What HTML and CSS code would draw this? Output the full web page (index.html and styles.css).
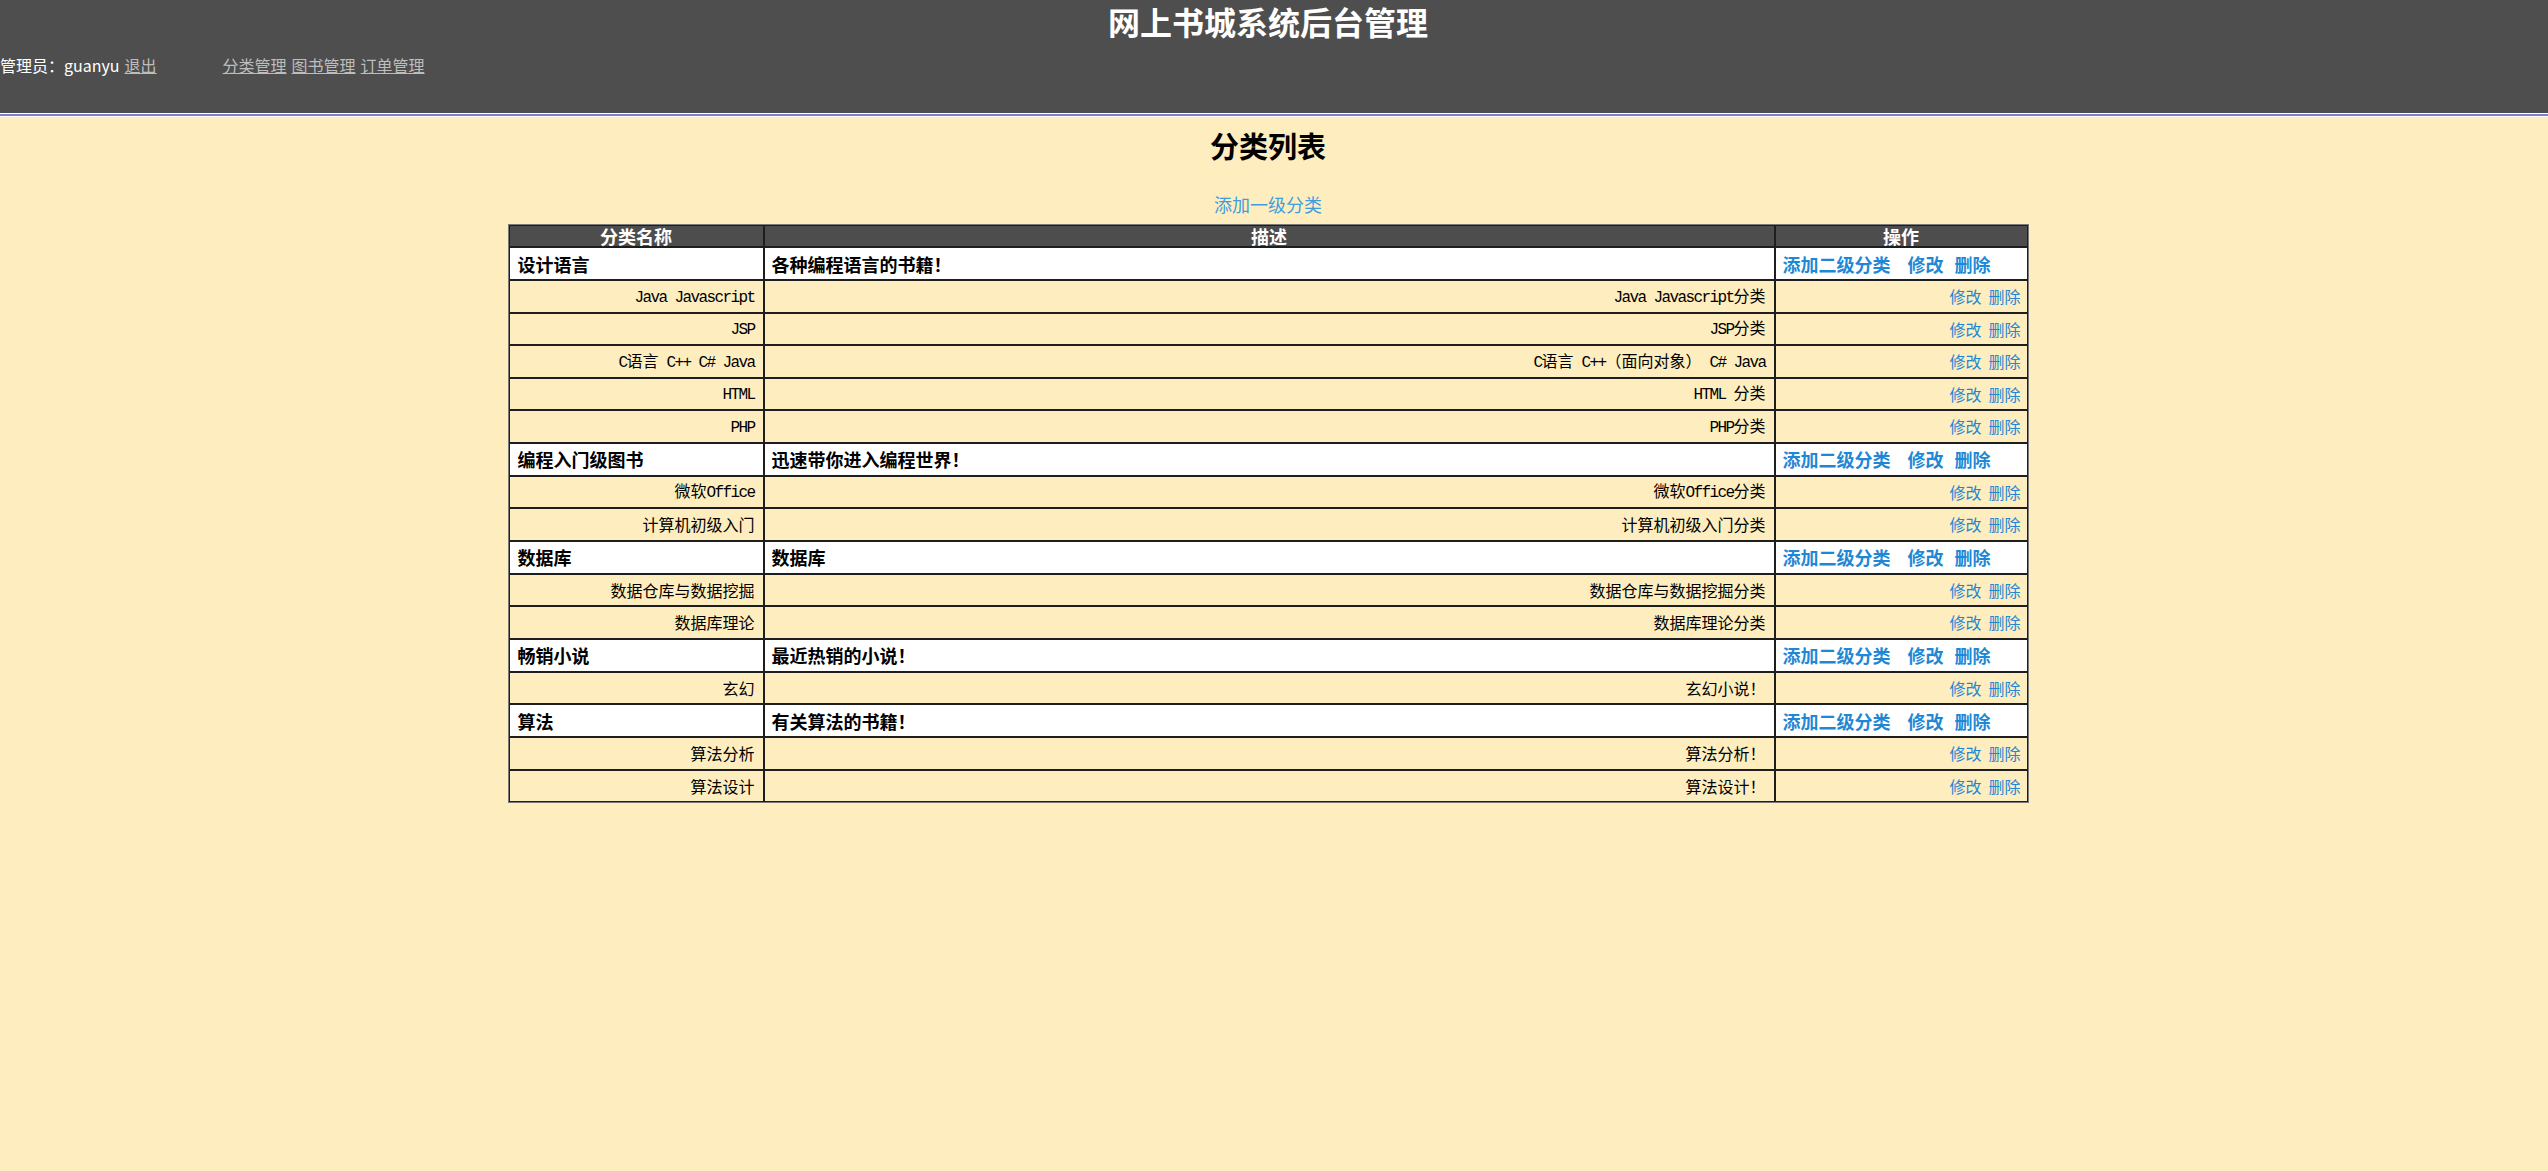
FILE: index.html
```html
<!DOCTYPE html>
<html lang="zh-CN">
<head>
<meta charset="utf-8">
<title>网上书城系统后台管理</title>
<link rel="stylesheet" href="styles.css">
</head>
<body>
<header class="top">
  <h1 class="title">网上书城系统后台管理</h1>
  <div class="bar">
    <span class="admin">管理员：guanyu <a class="toplink" href="#">退出</a></span>
    <nav class="nav">
      <a class="toplink" href="#">分类管理</a>
      <a class="toplink" href="#">图书管理</a>
      <a class="toplink" href="#">订单管理</a>
    </nav>
  </div>
</header>
<div class="rule"></div>
<main class="main">
  <h2 class="heading">分类列表</h2>
  <div class="add-row"><a class="add-top" href="#">添加一级分类</a></div>
  <table class="cats">
    <thead>
      <tr class="head">
        <th class="c1">分类名称</th>
        <th class="c2">描述</th>
        <th class="c3">操作</th>
      </tr>
    </thead>
    <tbody>
      <tr class="p">
        <td class="name">设计语言</td>
        <td class="desc">各种编程语言的书籍！</td>
        <td class="ops"><a class="op op-add" href="#">添加二级分类</a><a class="op op-edit" href="#">修改</a><a class="op" href="#">删除</a></td>
      </tr>
      <tr class="s">
        <td class="name"><span class="en">Java Javascript</span></td>
        <td class="desc"><span class="en">Java Javascript</span>分类</td>
        <td class="ops"><a class="op" href="#">修改</a><a class="op op-del" href="#">删除</a></td>
      </tr>
      <tr class="s">
        <td class="name"><span class="en">JSP</span></td>
        <td class="desc"><span class="en">JSP</span>分类</td>
        <td class="ops"><a class="op" href="#">修改</a><a class="op op-del" href="#">删除</a></td>
      </tr>
      <tr class="s">
        <td class="name"><span class="en">C</span>语言<span class="en"> C++ C# Java</span></td>
        <td class="desc"><span class="en">C</span>语言<span class="en"> C++</span>（面向对象）<span class="en"> C# Java</span></td>
        <td class="ops"><a class="op" href="#">修改</a><a class="op op-del" href="#">删除</a></td>
      </tr>
      <tr class="s">
        <td class="name"><span class="en">HTML</span></td>
        <td class="desc"><span class="en">HTML </span>分类</td>
        <td class="ops"><a class="op" href="#">修改</a><a class="op op-del" href="#">删除</a></td>
      </tr>
      <tr class="s">
        <td class="name"><span class="en">PHP</span></td>
        <td class="desc"><span class="en">PHP</span>分类</td>
        <td class="ops"><a class="op" href="#">修改</a><a class="op op-del" href="#">删除</a></td>
      </tr>
      <tr class="p">
        <td class="name">编程入门级图书</td>
        <td class="desc">迅速带你进入编程世界！</td>
        <td class="ops"><a class="op op-add" href="#">添加二级分类</a><a class="op op-edit" href="#">修改</a><a class="op" href="#">删除</a></td>
      </tr>
      <tr class="s">
        <td class="name">微软<span class="en">Office</span></td>
        <td class="desc">微软<span class="en">Office</span>分类</td>
        <td class="ops"><a class="op" href="#">修改</a><a class="op op-del" href="#">删除</a></td>
      </tr>
      <tr class="s">
        <td class="name">计算机初级入门</td>
        <td class="desc">计算机初级入门分类</td>
        <td class="ops"><a class="op" href="#">修改</a><a class="op op-del" href="#">删除</a></td>
      </tr>
      <tr class="p">
        <td class="name">数据库</td>
        <td class="desc">数据库</td>
        <td class="ops"><a class="op op-add" href="#">添加二级分类</a><a class="op op-edit" href="#">修改</a><a class="op" href="#">删除</a></td>
      </tr>
      <tr class="s">
        <td class="name">数据仓库与数据挖掘</td>
        <td class="desc">数据仓库与数据挖掘分类</td>
        <td class="ops"><a class="op" href="#">修改</a><a class="op op-del" href="#">删除</a></td>
      </tr>
      <tr class="s">
        <td class="name">数据库理论</td>
        <td class="desc">数据库理论分类</td>
        <td class="ops"><a class="op" href="#">修改</a><a class="op op-del" href="#">删除</a></td>
      </tr>
      <tr class="p">
        <td class="name">畅销小说</td>
        <td class="desc">最近热销的小说！</td>
        <td class="ops"><a class="op op-add" href="#">添加二级分类</a><a class="op op-edit" href="#">修改</a><a class="op" href="#">删除</a></td>
      </tr>
      <tr class="s">
        <td class="name">玄幻</td>
        <td class="desc">玄幻小说！</td>
        <td class="ops"><a class="op" href="#">修改</a><a class="op op-del" href="#">删除</a></td>
      </tr>
      <tr class="p">
        <td class="name">算法</td>
        <td class="desc">有关算法的书籍！</td>
        <td class="ops"><a class="op op-add" href="#">添加二级分类</a><a class="op op-edit" href="#">修改</a><a class="op" href="#">删除</a></td>
      </tr>
      <tr class="s">
        <td class="name">算法分析</td>
        <td class="desc">算法分析！</td>
        <td class="ops"><a class="op" href="#">修改</a><a class="op op-del" href="#">删除</a></td>
      </tr>
      <tr class="s">
        <td class="name">算法设计</td>
        <td class="desc">算法设计！</td>
        <td class="ops"><a class="op" href="#">修改</a><a class="op op-del" href="#">删除</a></td>
      </tr>
    </tbody>
  </table>
</main>
</body>
</html>
```
FILE: styles.css
```css
html, body {
  margin: 0;
  padding: 0;
}
body {
  background: #feedbe;
  font-family: "Noto Sans CJK SC", "Noto Sans", sans-serif;
  font-size: 16px;
  color: #000;
}

/* ---------- top bar ---------- */
.top {
  background: #4e4e4e;
  height: 113px;
  box-sizing: border-box;
  padding-right: 12px;
}
.title {
  margin: 0;
  font-size: 32px;
  line-height: 42px;
  font-weight: 700;
  color: #fff;
  text-align: center;
}
.bar {
  display: flex;
  align-items: center;
  margin-top: 12px;
  height: 23px;
  line-height: 23px;
  color: #fff;
  font-size: 16px;
  white-space: nowrap;
}
.admin {
  display: inline-flex;
  gap: 5px;
}
.nav {
  display: flex;
  gap: 5px;
  margin-left: 66px;
}
.toplink {
  color: #bdbdbd;
  text-decoration: underline;
}

.rule {
  height: 2px;
  background: #7d7dd2;
  border-top: 1px solid #fff;
  border-bottom: 1px solid #fff;
}

/* ---------- main ---------- */
.main {
  margin-right: 12px;
  text-align: center;
}
.heading {
  margin: 7px 0 0;
  font-size: 29px;
  line-height: 42px;
  font-weight: 700;
}
.add-row {
  margin-top: 25px;
  line-height: 26px;
  font-size: 18px;
}
.add-top {
  color: #3f9ddf;
  text-decoration: none;
}

/* ---------- table ---------- */
.cats {
  margin: 7px auto 0;
  width: 1521px;
  table-layout: fixed;
  border-collapse: separate;
  border-spacing: 0;
  border: 1px solid #7a7a7a;
  text-align: left;
}
.cats th,
.cats td {
  box-sizing: border-box;
  border: 1px solid #1e1e1e;
  padding: 0 8px;
  vertical-align: middle;
  line-height: 20px;
  white-space: nowrap;
}
.cats .c1 { width: 255px; }
.cats .c2 { width: 1011px; }
.cats .c3 { width: 253px; }

.head { height: 22px; }
.head th {
  background: #4d4d4d;
  color: #fff;
  font-size: 18px;
  line-height: 18px;
  font-weight: 700;
  text-align: center;
  padding: 0;
}

tr.p { height: 33px; background: #fff; }
tr.p td {
  font-size: 18px;
  font-weight: 700;
  text-align: left;
}
tr.p .desc { padding-left: 7px; }
tr.p .ops { padding-left: 7px; }

tr.s { height: 32.5px; }
tr.s td {
  font-size: 16px;
  font-weight: 400;
  text-align: right;
}
tr.s .ops { padding-right: 6px; }

.en {
  font-family: "Liberation Mono", monospace;
  font-size: 16px;
  letter-spacing: -1.6px;
}

.op {
  color: #1f88d6;
  text-decoration: none;
}
.op-add { margin-right: 17px; }
.op-edit { margin-right: 11px; }
.op-del { margin-left: 7px; }
```
